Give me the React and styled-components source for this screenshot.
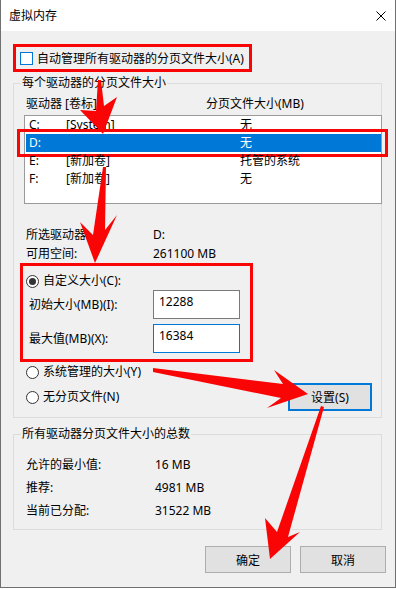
import React from "react";
import styled, { createGlobalStyle } from "styled-components";

const RED = "#fa0505";

const GlobalStyle = createGlobalStyle`
  * {
    box-sizing: border-box;
  }
  body {
    margin: 0;
    background: #fff;
    font-family: "Noto Sans", "Noto Sans CJK SC", sans-serif;
    font-size: 12px;
    color: #000;
  }
`;

const drives = [
  { letter: "C:", label: "[System]", size: "无" },
  { letter: "D:", label: "", size: "无", selected: true },
  { letter: "E:", label: "[新加卷]", size: "托管的系统" },
  { letter: "F:", label: "[新加卷]", size: "无" },
];

const totals = [
  ["允许的最小值:", "16 MB"],
  ["推荐:", "4981 MB"],
  ["当前已分配:", "31522 MB"],
];

// annotation arrows drawn over the dialog
const arrows = [
  "98,80 101,80 104,106 117,97 103,134 80,110 96,111",
  "103,167 106,167 105,230 117,215 95,263 80,222 93,235",
  "153,368 283,384 274,370 308,394 267,408 281,398 153,372",
  "321,406 324,407 288,537 300,532 270,559 265,518 277,532",
];

function App() {
  return (
    <>
      <GlobalStyle />
      <Window>
        <TitleBar>
          <span>虚拟内存</span>
          <svg width="10" height="10" viewBox="0 0 10 10">
            <path d="M0.5 0.5 L9.5 9.5 M9.5 0.5 L0.5 9.5" stroke="#000" strokeWidth="1" />
          </svg>
        </TitleBar>
        <Body>
          <CheckRow>
            <Checkbox />
            <span>自动管理所有驱动器的分页文件大小(A)</span>
          </CheckRow>

          <GroupBox $gap={11} $pb={6}>
            <GroupTitle>每个驱动器的分页文件大小</GroupTitle>
            <ColumnHeader>
              <span>驱动器 [卷标]</span>
              <span>分页文件大小(MB)</span>
            </ColumnHeader>
            <ListBox>
              {drives.map((d) => (
                <DriveRow key={d.letter} $selected={d.selected}>
                  <span>{d.letter}</span>
                  <span>{d.label}</span>
                  <span>{d.size}</span>
                </DriveRow>
              ))}
            </ListBox>
            <InfoGrid>
              <span>所选驱动器:</span>
              <span>D:</span>
              <span>可用空间:</span>
              <span>261100 MB</span>
            </InfoGrid>
            <CustomBox>
              <OptionRow>
                <Radio $checked />
                <span>自定义大小(C):</span>
              </OptionRow>
              <FieldRow>
                <span>初始大小(MB)(I):</span>
                <SizeInput readOnly defaultValue="12288" />
              </FieldRow>
              <FieldRow $mt={5}>
                <span>最大值(MB)(X):</span>
                <SizeInput readOnly defaultValue="16384" $focused />
              </FieldRow>
            </CustomBox>
            <OptionRow $mt={2} $h={16} $pl={2}>
              <Radio />
              <span>系统管理的大小(Y)</span>
            </OptionRow>
            <BottomRow>
              <OptionRow $h={28}>
                <Radio />
                <span>无分页文件(N)</span>
              </OptionRow>
              <SetButton>设置(S)</SetButton>
            </BottomRow>
          </GroupBox>

          <GroupBox $gap={16} $pb={9}>
            <GroupTitle>所有驱动器分页文件大小的总数</GroupTitle>
            <TotalsGrid>
              {totals.map(([k, v]) => (
                <React.Fragment key={k}>
                  <span>{k}</span>
                  <span>{v}</span>
                </React.Fragment>
              ))}
            </TotalsGrid>
          </GroupBox>

          <ButtonRow>
            <DialogButton>确定</DialogButton>
            <DialogButton>取消</DialogButton>
          </ButtonRow>
        </Body>

        <Overlay width="396" height="589" viewBox="0 0 396 589">
          {arrows.map((pts) => (
            <polygon key={pts} points={pts} fill={RED} />
          ))}
        </Overlay>
      </Window>
    </>
  );
}

const Window = styled.div`
  position: relative;
  width: 396px;
  height: 588px;
  display: flex;
  flex-direction: column;
  background: #f0f0f0;
  border: 1px solid #707070;
  border-top: 0;
`;

const TitleBar = styled.div`
  height: 31px;
  flex-shrink: 0;
  display: flex;
  align-items: center;
  justify-content: space-between;
  padding: 0 9px 0 8px;
  background: #fff;
  line-height: 16px;
`;

const Body = styled.div`
  padding: 13px 13px 0 12px;
`;

const CheckRow = styled.label`
  display: flex;
  align-items: center;
  gap: 4px;
  width: 239px;
  height: 28px;
  padding: 1px 0 0 4px;
  border: 3px solid ${RED};
  line-height: 16px;
`;

const Checkbox = styled.span`
  width: 13px;
  height: 13px;
  flex-shrink: 0;
  border: 1px solid #0078d7;
  background: #fff;
`;

const GroupBox = styled.div`
  margin-top: ${(p) => p.$gap}px;
  padding: 0 0 ${(p) => p.$pb}px 10px;
  border: 1px solid #dcdcdc;
`;

const GroupTitle = styled.div`
  width: fit-content;
  margin: -9px 0 0 -3px;
  padding: 0 1px;
  background: #f0f0f0;
  line-height: 16px;
`;

const ColumnHeader = styled.div`
  display: grid;
  grid-template-columns: 180px 1fr;
  margin-top: 5px;
  padding-left: 2px;
  line-height: 16px;
`;

const ListBox = styled.div`
  height: 89px;
  margin: 3px -1px 0 0;
  padding-left: 1px;
  border: 1px solid #9a9a9a;
  background: #fff;
`;

const DriveRow = styled.div`
  position: relative;
  display: grid;
  grid-template-columns: 37px 174px 1fr;
  height: 18px;
  padding-left: 3px;
  line-height: 18px;
  background: ${(p) => (p.$selected ? "#0078d7" : "transparent")};
  color: ${(p) => (p.$selected ? "#fff" : "#000")};

  &::after {
    content: "";
    display: ${(p) => (p.$selected ? "block" : "none")};
    position: absolute;
    top: -5px;
    bottom: -5px;
    left: -9px;
    right: -7px;
    border: 3px solid ${RED};
  }
`;

const InfoGrid = styled.div`
  display: grid;
  grid-template-columns: 127px 1fr;
  row-gap: 1px;
  margin-top: 22px;
  padding-left: 2px;
  line-height: 18px;
`;

const CustomBox = styled.div`
  width: 233px;
  margin-left: -4px;
  padding: 6px 0 6px 3px;
  border: 3px solid ${RED};
`;

const OptionRow = styled.label`
  display: flex;
  align-items: center;
  gap: 4px;
  height: ${(p) => p.$h || 18}px;
  margin-top: ${(p) => p.$mt || 0}px;
  padding-left: ${(p) => p.$pl || 0}px;
  line-height: 16px;
`;

const Radio = styled.span`
  position: relative;
  width: 13px;
  height: 13px;
  flex-shrink: 0;
  border: 1px solid #333;
  border-radius: 50%;
  background: #fff;

  &::after {
    content: "";
    display: ${(p) => (p.$checked ? "block" : "none")};
    position: absolute;
    inset: 2px;
    border-radius: 50%;
    background: #333;
  }
`;

const FieldRow = styled.div`
  display: grid;
  grid-template-columns: 124px 87px;
  align-items: center;
  margin-top: ${(p) => p.$mt || 0}px;
  padding-left: 3px;
  line-height: 16px;
`;

const SizeInput = styled.input`
  width: 87px;
  height: 29px;
  padding: 3px 5px 9px;
  border: 1px solid ${(p) => (p.$focused ? "#0078d7" : "#7a7a7a")};
  background: #fff;
  font: inherit;
  color: #000;
  outline: none;
`;

const BottomRow = styled.div`
  display: flex;
  align-items: center;
  justify-content: space-between;
  margin-top: 3px;
  padding-left: 2px;
`;

const SetButton = styled.button`
  width: 84px;
  height: 28px;
  margin-right: 9px;
  padding: 0;
  border: 2px solid #0078d7;
  background: #e1e1e1;
  font: inherit;
  color: #000;
`;

const TotalsGrid = styled.div`
  display: grid;
  grid-template-columns: 129px 1fr;
  row-gap: 5px;
  margin-top: 14px;
  padding-left: 2px;
  line-height: 18px;
`;

const ButtonRow = styled.div`
  display: flex;
  justify-content: flex-end;
  gap: 9px;
  margin: 16px -4px 0 0;
`;

const DialogButton = styled.button`
  width: 86px;
  height: 27px;
  padding: 0;
  border: 1px solid #adadad;
  background: #e1e1e1;
  font: inherit;
  color: #000;
`;

const Overlay = styled.svg`
  position: absolute;
  top: 0;
  left: -1px;
  pointer-events: none;
`;

export default App;
